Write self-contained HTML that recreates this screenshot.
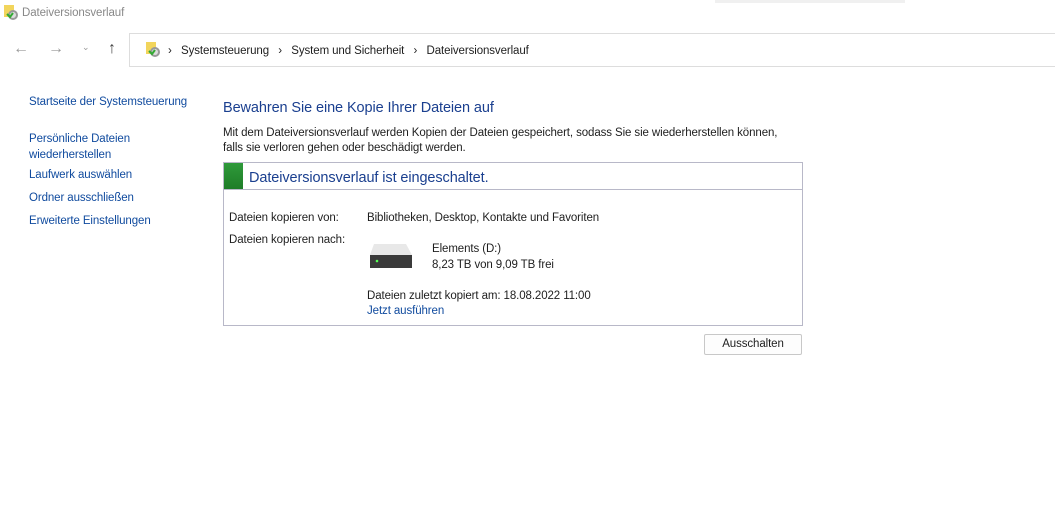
<!DOCTYPE html>
<html><head><meta charset="utf-8"><style>
body{margin:0;width:1055px;height:532px;background:#fff;font-family:"Liberation Sans",sans-serif;font-size:11.5px;letter-spacing:-0.1px;color:#1e1e1e;position:relative;overflow:hidden}
.a{position:absolute;white-space:nowrap;margin-top:2px}
.l{color:#0f4a9e}
.blue{color:#1a3f8f}
</style></head><body>
<div class="a" style="left:715px;top:-2px;width:190px;height:3px;background:#f0f0f0"></div>
<svg class="a" style="left:3px;top:2px" width="16" height="16"><rect x="1" y="1" width="10" height="12" fill="#f2d55c"/><circle cx="10" cy="11" r="5" fill="#999"/><circle cx="10" cy="11" r="3" fill="#ddd"/><path d="M4 10 l3 3 l3 -4" stroke="#3a3" stroke-width="2" fill="none"/></svg>
<div class="a" style="left:22px;top:5px;color:#888">Dateiversionsverlauf</div>
<div class="a" style="left:13px;top:38px;color:#999;font-size:16px">←</div>
<div class="a" style="left:48px;top:38px;color:#999;font-size:16px">→</div>
<div class="a" style="left:82px;top:40px;color:#999;font-size:9px">⌄</div>
<div class="a" style="left:108px;top:38px;color:#444;font-size:16px">↑</div>
<div class="a" style="left:129px;top:31px;width:930px;height:32px;border:1px solid #ddd"></div>
<svg class="a" style="left:145px;top:39px" width="16" height="16"><rect x="1" y="1" width="10" height="12" fill="#f2d55c"/><circle cx="10" cy="11" r="5" fill="#999"/><circle cx="10" cy="11" r="3" fill="#ddd"/><path d="M4 10 l3 3 l3 -4" stroke="#3a3" stroke-width="2" fill="none"/></svg>
<div class="a" style="left:168px;top:43px">›&nbsp;&nbsp; Systemsteuerung &nbsp;&nbsp;›&nbsp;&nbsp; System und Sicherheit &nbsp;&nbsp;›&nbsp;&nbsp; Dateiversionsverlauf</div>
<div class="a l" style="left:29px;top:94px">Startseite der Systemsteuerung</div>
<div class="a l" style="left:29px;top:129px;line-height:16px">Persönliche Dateien<br>wiederherstellen</div>
<div class="a l" style="left:29px;top:167px">Laufwerk auswählen</div>
<div class="a l" style="left:29px;top:190px">Ordner ausschließen</div>
<div class="a l" style="left:29px;top:213px">Erweiterte Einstellungen</div>
<div class="a blue" style="left:223px;top:98px;font-size:14.5px">Bewahren Sie eine Kopie Ihrer Dateien auf</div>
<div class="a" style="left:223px;top:124px;line-height:15px;font-size:11.5px">Mit dem Dateiversionsverlauf werden Kopien der Dateien gespeichert, sodass Sie sie wiederherstellen können,<br>falls sie verloren gehen oder beschädigt werden.</div>
<div class="a" style="left:223px;top:160px;width:578px;height:162px;border:1px solid #b8b8c8"></div>
<div class="a" style="left:224px;top:161px;width:578px;height:26px;border-bottom:1px solid #b8b8c8"></div>
<div class="a" style="left:224px;top:161px;width:19px;height:26px;background:linear-gradient(#2f9a3a,#1e7d28)"></div>
<div class="a blue" style="left:249px;top:168px;font-size:14.5px">Dateiversionsverlauf ist eingeschaltet.</div>
<div class="a" style="left:229px;top:210px">Dateien kopieren von:</div>
<div class="a" style="left:367px;top:210px">Bibliotheken, Desktop, Kontakte und Favoriten</div>
<div class="a" style="left:229px;top:232px">Dateien kopieren nach:</div>
<svg class="a" style="left:368px;top:241px" width="46" height="26"><path d="M6 1 H38 L44 12 H2 Z" fill="#e8e8e8"/><rect x="2" y="12" width="42" height="13" fill="#3a3a3a"/><circle cx="9" cy="18" r="1.3" fill="#5f5"/></svg>
<div class="a" style="left:432px;top:241px">Elements (D:)</div>
<div class="a" style="left:432px;top:257px">8,23 TB von 9,09 TB frei</div>
<div class="a" style="left:367px;top:288px">Dateien zuletzt kopiert am: 18.08.2022 11:00</div>
<div class="a l" style="left:367px;top:303px">Jetzt ausführen</div>
<div class="a" style="left:704px;top:332px;width:96px;height:19px;border:1px solid #c8c8c8;border-radius:2px;background:#fdfdfd;text-align:center;line-height:19px">Ausschalten</div>
</body></html>
